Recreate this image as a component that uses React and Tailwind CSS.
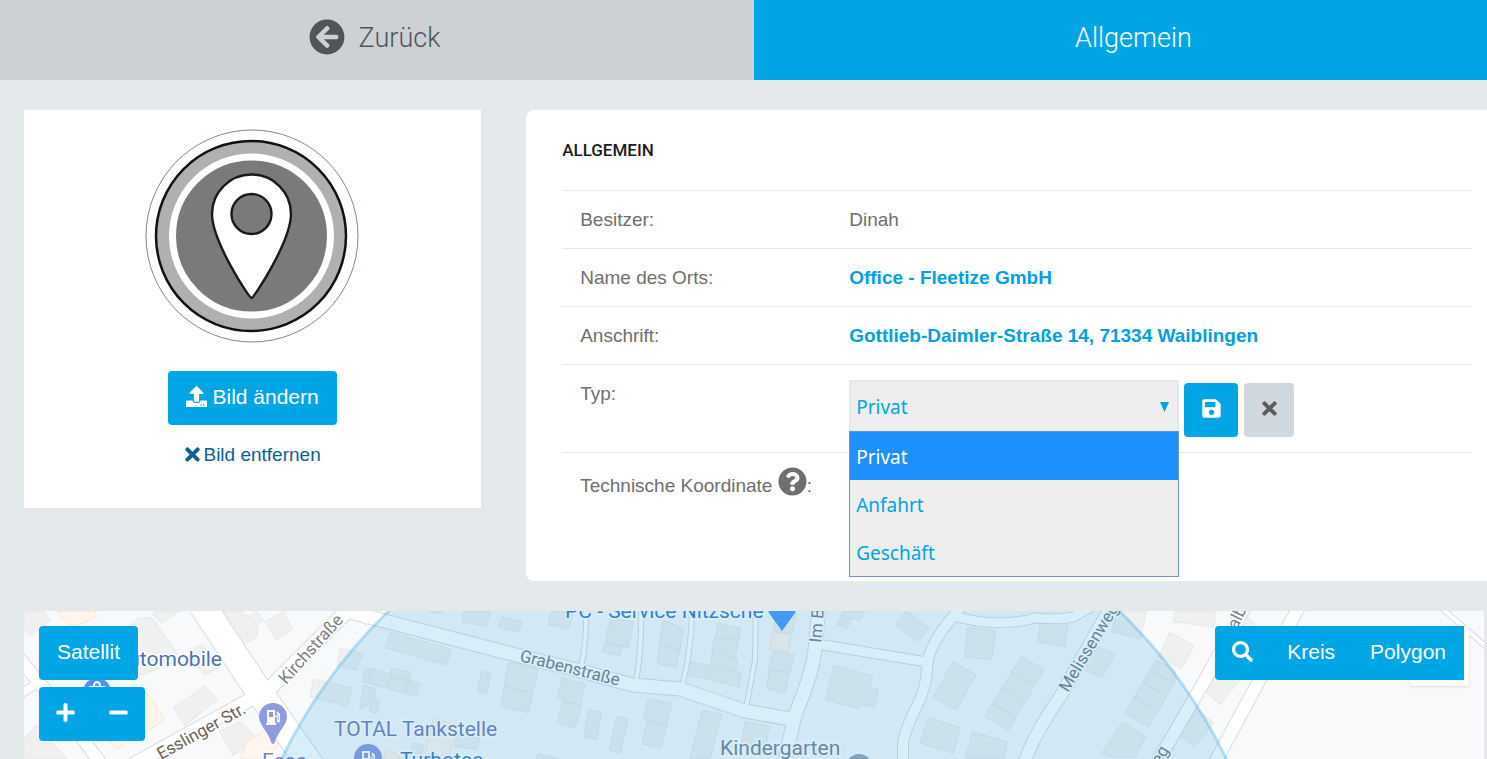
import {
    FaArrowCircleLeft,
    FaMinus,
    FaPlus,
    FaQuestionCircle,
    FaSave,
    FaSearch,
    FaTimes,
    FaUpload,
} from "react-icons/fa";

const TYPES = ["Privat", "Anfahrt", "Geschäft"];

// building outlines, grouped by map tile (three units per screen pixel)
const TILES = [
    {
        x: 0,
        buildings: [
            "72,18 130,18 152,45 95,92 72,75",
            "415,38 455,38 545,165 430,208 400,208 330,120",
            "465,18 538,18 485,55 458,30",
            "585,130 605,118 655,170 655,190 615,210 572,160",
            "520,308 615,243 652,285 555,362",
            "658,378 725,350 770,400 700,452",
            "670,18 725,18 735,30 690,60",
            "693,68 745,30 775,62 770,95 730,120",
            "750,35 770,18 790,45 770,60",
            "795,50 850,20 876,72 830,104",
            "72,400 110,360 200,462 72,462",
            "940,222 1058,250 1040,305 1000,292 930,275",
            "1020,130 1088,145 1070,195 1012,182",
            "1095,190 1125,195 1125,240 1088,230",
            "1090,240 1125,250 1125,290 1080,310",
        ],
        shops: [
            "170,18 285,18 290,35 232,62 205,62",
            "438,262 495,345 350,432 320,400 438,330",
            "740,410 800,370 840,410 800,462 720,462",
        ],
    },
    {
        x: 370,
        buildings: [
            "62,83 243,133 230,180 45,128",
            "283,18 360,18 350,64 277,50",
            "395,36 454,50 447,80 385,66",
            "545,18 610,18 595,71 535,58",
            "185,15 220,15 215,26 182,22",
            "720,40 790,50 775,128 707,110",
            "705,113 755,125 748,152 698,140",
            "880,45 942,72 930,132 868,120",
            "868,120 930,132 917,188 862,175",
            "1045,55 1112,70 1105,110 1038,95",
            "1035,93 1105,108 1095,160 1025,148",
            "1028,145 1103,162 1095,205 1020,190",
            "950,167 1114,203 1107,245 945,208",
            "0,190 65,208 55,250 0,236",
            "65,190 122,202 118,228 62,215",
            "62,215 118,228 107,265 53,250",
            "118,226 150,234 140,275 107,265",
            "0,278 30,288 20,325 0,320",
            "335,198 362,206 350,265 322,260",
            "415,172 505,192 475,323 393,305",
            "575,218 645,238 632,300 562,282",
            "578,290 634,302 615,368 562,355",
            "655,313 695,322 680,404 642,396",
            "740,335 775,342 750,444 718,436",
            "835,280 905,296 890,360 820,342",
            "832,346 890,360 872,430 816,416",
            "997,315 1055,328 1020,462 960,462",
            "130,414 162,420 155,447 122,442",
            "262,390 330,400 320,434 255,425",
            "505,447 570,462 500,462",
        ],
        shops: ["190,340 262,360 255,400 235,455 165,445 175,400", "50,430 95,462 40,462"],
    },
    {
        x: 740,
        buildings: [
            "310,18 375,18 358,48 305,28",
            "305,28 335,42 320,72 291,58",
            "500,18 566,70 532,110 465,58",
            "283,182 398,212 388,245 416,254 402,306 360,298 355,311 256,284",
            "682,67 767,78 755,164 675,155",
            "903,42 985,55 974,124 892,112",
            "640,170 708,210 648,316 580,276",
            "845,154 912,194 805,376 735,334",
            "565,338 662,368 640,444 540,414",
            "698,380 802,412 790,462 675,462",
            "1060,120 1125,145 1085,219 1035,195",
            "100,140 162,150 150,205 84,192",
            "88,194 148,206 135,264 79,250",
            "15,350 88,364 75,430 5,420",
            "110,18 170,18 158,85 100,80",
        ],
        shops: ["100,80 153,90 145,142 90,132"],
    },
    {
        x: 1110,
        buildings: [
            "195,18 318,18 312,66 190,50",
            "20,18 108,18 92,102 5,80",
            "180,82 252,122 214,192 145,155",
            "138,165 196,195 195,230 116,365 45,325",
            "38,350 108,395 75,455 0,455 -25,445",
            "330,165 395,220 330,298 262,240",
            "245,298 312,355 252,425 188,372",
            "415,38 445,70 370,80 380,50",
        ],
        shops: [],
    },
];

const ROADS = [
    { d: "M202 605 L258 690 L314 770", w: 28 },
    { d: "M270 688 L350 608 L370 618", w: 16 },
    { d: "M255 697 L130 766", w: 15 },
    { d: "M14 652 L60 708 L102 765", w: 14 },
    { d: "M20 694 L44 680", w: 10 },
    { d: "M350 612 L520 656 L577 670 L633 685 L680 689 L745 711 L790 719", w: 15 },
    { d: "M586 605 Q587 640 581 668", w: 6 },
    { d: "M641 605 Q642 650 636 682", w: 6 },
    { d: "M692 605 Q692 650 682 686", w: 6 },
    { d: "M756 605 L755 660 L746 708", w: 6 },
    { d: "M819 605 L815 650 Q812 675 795 715 L783 770", w: 15 },
    { d: "M817 644 L927 662", w: 11 },
    { d: "M965 603 Q930 640 927 665 Q928 685 915 710 Q903 735 903 745 L903 770", w: 12 },
    { d: "M957 617 Q1000 628 1035 618 Q1060 620 1073 617 L1098 603", w: 11 },
    { d: "M1022 768 Q1036 730 1060 697 L1112 605", w: 14 },
    { d: "M1154 768 L1205 680 L1246 605", w: 14 },
    { d: "M1212 768 L1300 605", w: 14 },
    { d: "M1438 605 L1490 650", w: 6 },
];

const FuelPin = ({ x, y }) => (
    <g transform={`translate(${x} ${y})`}>
        <path
            d="M-14 0 A14 14 0 1 1 14 0 C14 8 5 14 1.5 26 Q0 28 -1.5 26 C-5 14 -14 8 -14 0Z"
            fill="#8f9be0"
        />
        <path
            d="M-6 -7 h8 v13 h1 v2 h-10 v-2 h1z M-4 -5 v5 h4 v-5z M4 -6 l3 3 v7 a1.6 1.6 0 0 1 -3.200 0 v-4 h-1.500 v-1.500 h2.500 v4.500 h.8 v-4 l-2 -2z"
            fill="#fff"
            fillRule="evenodd"
        />
    </g>
);

const MapCanvas = () => (
    <svg
        className="absolute inset-0 h-full w-full font-['Roboto',sans-serif]"
        viewBox="24 611 1460 148"
        preserveAspectRatio="xMidYMin slice"
        aria-hidden="true"
    >
        <rect x="0" y="600" width="1500" height="200" fill="#f8f9fb" />
        {TILES.map((tile) => (
            <g key={tile.x} transform={`translate(${tile.x} 605) scale(0.33333)`} strokeWidth="3">
                {tile.buildings.map((points) => (
                    <polygon key={points} points={points} fill="#f0f0f0" stroke="#e6e7e8" />
                ))}
                {tile.shops.map((points) => (
                    <polygon key={points} points={points} fill="#fef6ee" stroke="#fbe3cd" />
                ))}
            </g>
        ))}
        <path
            d="M1010 671 L1031 683 M1001 687 L1022 698 M992 704 L1013 715 M1150 669 L1168 680 M1143 682 L1161 693 M1134 697 L1152 707 M505 687 L532 693"
            stroke="#e2e4e6"
            fill="none"
        />
        <g fill="none" stroke="#d8dbe0" strokeLinejoin="round">
            {ROADS.map((road) => (
                <path key={road.d} d={road.d} strokeWidth={road.w} />
            ))}
        </g>
        <g fill="none" stroke="#fff" strokeLinejoin="round">
            {ROADS.map((road) => (
                <path key={road.d} d={road.d} strokeWidth={road.w - 2} />
            ))}
        </g>

        <circle cx="97" cy="692" r="14" fill="#5491f5" />
        <path d="M90 687 h14 v12 h-14z M94 687 v-1 a3 4 0 0 1 6 0 v1" fill="none" stroke="#fff" strokeWidth="2" />
        <FuelPin x={273} y={717} />
        <FuelPin x={368} y={758} />
        <path d="M767 605 h30 l-2 8 l-13 18 l-13 -18z" fill="#4f9bf7" />
        <circle cx="859" cy="767" r="13" fill="#9aa5b1" />

        <g stroke="#fff" strokeWidth="3" paintOrder="stroke" fontSize="21">
            <text x="222" y="666" textAnchor="end" fill="#4a71b8">Automobile</text>
            <text x="334" y="736" fill="#7480bb">TOTAL Tankstelle</text>
            <text x="262" y="768" fill="#7480bb">Esso</text>
            <text x="400" y="767" fill="#3f7cc9">Turbotec</text>
            <text x="565" y="618" fill="#3f7cc9">PC - Service Nitzsche</text>
            <text x="720" y="755" fill="#7c8794">Kindergarten</text>
            <g fontSize="17" fill="#7a8086">
                <text transform="translate(519 661) rotate(14)">Grabenstraße</text>
                <text transform="translate(286 685) rotate(-48)">Kirchstraße</text>
                <text transform="translate(161 760) rotate(-29)" fill="#6b6259">Esslinger Str.</text>
                <text transform="translate(1068 693) rotate(-59)">Melissenweg</text>
                <text transform="translate(821 643) rotate(-85)">Im Bild</text>
                <text transform="translate(1237 630) rotate(-64)">alber</text>
                <text transform="translate(1160 766) rotate(-60)">eg</text>
            </g>
        </g>

        <circle
            cx="754"
            cy="988"
            r="525"
            fill="#0a95dc"
            fillOpacity="0.16"
            stroke="#1a9ee6"
            strokeOpacity="0.28"
            strokeWidth="3"
        />
    </svg>
);

const PlaceImage = () => (
    <svg className="h-[214px] w-[214px] overflow-visible" viewBox="1 0 214 214" role="img" aria-label="Ort">
        <circle cx="107" cy="107" r="106" fill="#fff" stroke="#7f859c" />
        <circle cx="106" cy="107" r="95" fill="#b1afb0" stroke="#111" strokeWidth="2.500" />
        <circle cx="106.500" cy="107" r="79" fill="#7a7a7a" stroke="#fff" strokeWidth="7" />
        <path
            d="M106.500 169 C104 169 67 112 67 85 A39.500 39.500 0 0 1 146 85 C146 112 109 169 106.500 169Z"
            fill="#fff"
            stroke="#1a1a1a"
            strokeWidth="2.400"
        />
        <circle cx="106.500" cy="85" r="20" fill="#7a7a7a" stroke="#1a1a1a" strokeWidth="2.400" />
    </svg>
);

const Row = ({ label, children }) => (
    <tr className="border-t border-[#e4eaee]">
        <th scope="row" className="w-[287px] py-[14px] pl-[18px] text-left align-top font-normal">
            {label}
        </th>
        <td className="py-[14px]">{children}</td>
    </tr>
);

const TypeSelect = () => (
    <div className="relative w-[330px]">
        <select
            id="type"
            defaultValue="Privat"
            className="block h-[52px] w-full appearance-none border-2 border-[#e4e9ec] bg-[#eeeeee] px-[5px] pt-[2px] font-['Noto_Sans',sans-serif] text-[19px] text-[#00a5e6] outline-none"
        >
            {TYPES.map((type) => (
                <option key={type}>{type}</option>
            ))}
        </select>
        <svg className="pointer-events-none absolute right-[10px] top-[22px] h-[10px] w-[9px]" viewBox="0 0 9 10">
            <path d="M0 0 h9 l-4.500 10z" fill="#00a5e6" />
        </svg>
        <ul
            role="listbox"
            aria-label="Typ"
            className="absolute left-0 top-[51px] z-10 w-full border border-[#6f93cb] bg-[#eeeeee] font-['Noto_Sans',sans-serif] text-[19px] text-[#00a5e6]"
        >
            {TYPES.map((type) => (
                <li
                    key={type}
                    role="option"
                    aria-selected={type === "Privat"}
                    className="px-1.5 pt-[2px] leading-[46px] aria-selected:bg-[#1e90ff] aria-selected:text-white"
                >
                    {type}
                </li>
            ))}
        </ul>
    </div>
);

export default function App() {
    return (
        <div className="flex min-h-screen flex-col overflow-hidden bg-[#e4e9ec] font-['Liberation_Sans',sans-serif] text-[19px] leading-[29px] text-[#6f6f6f]">
            <nav className="-ml-[5px] -mr-[26px] grid h-20 grid-cols-2 font-['Roboto',sans-serif] text-[27px] font-light">
                <a href="#back" className="flex items-center justify-center gap-[14px] bg-[#cdd1d3] pb-[3px] text-[#50555a]">
                    <FaArrowCircleLeft className="mb-[3px] text-[36px]" />
                    Zurück
                </a>
                <a href="#general" className="flex items-center justify-center bg-[#00a5e6] pb-[3px] text-white">
                    Allgemein
                </a>
            </nav>

            <div className="flex items-start gap-[45px] py-[30px] pl-6">
                <section className="flex h-[398px] w-5/16 shrink-0 flex-col items-center bg-white pt-[19px]">
                    <PlaceImage />
                    <button className="mt-7 flex h-[54px] items-center gap-[5px] rounded bg-[#00a5e6] px-[18px] pb-1 text-[21px] text-white">
                        <FaUpload />
                        Bild ändern
                    </button>
                    <button className="mt-[15px] flex items-center pr-[2px] text-[#0d5f91]">
                        <FaTimes className="text-[21px]" />
                        Bild entfernen
                    </button>
                </section>

                <section className="min-h-[471px] flex-1 rounded-l-lg bg-white pl-9 pr-[15px] pt-[26px]">
                    <h2 className="font-['Roboto',sans-serif] text-[17px] font-medium text-[#1c1c1c]">ALLGEMEIN</h2>
                    <table className="mt-[25px] w-full border-collapse">
                        <tbody>
                            <Row label="Besitzer:">Dinah</Row>
                            <Row label="Name des Orts:">
                                <a href="#name" className="font-bold text-[#009fe0]">Office - Fleetize GmbH</a>
                            </Row>
                            <Row label="Anschrift:">
                                <a href="#address" className="font-bold text-[#009fe0]">
                                    Gottlieb-Daimler-Straße 14, 71334 Waiblingen
                                </a>
                            </Row>
                            <Row label={<label htmlFor="type">Typ:</label>}>
                                <div className="flex items-start gap-[5px] py-px">
                                    <TypeSelect />
                                    <div className="flex gap-1.5 pt-[3px]">
                                        <button
                                            aria-label="Speichern"
                                            className="flex h-[54px] w-[54px] items-center justify-center rounded bg-[#00a5e6] pb-1 text-[21px] text-white"
                                        >
                                            <FaSave />
                                        </button>
                                        <button
                                            aria-label="Abbrechen"
                                            className="flex h-[54px] w-[50px] items-center justify-center rounded bg-[#d0d8de] pb-1 text-[21px] text-[#5c5c5c]"
                                        >
                                            <FaTimes />
                                        </button>
                                    </div>
                                </div>
                            </Row>
                            <Row
                                label={
                                    <span className="whitespace-nowrap">
                                        Technische Koordinate{" "}
                                        <FaQuestionCircle className="inline align-[-4px] text-[29px]" />:
                                    </span>
                                }
                            />
                        </tbody>
                    </table>
                </section>
            </div>

            <section className="relative mr-[3px] ml-6 min-h-[148px] flex-1 overflow-hidden">
                <MapCanvas />
                <div className="relative flex items-start justify-between p-[15px] pr-5 text-[21px] text-white">
                    <div className="flex flex-col items-start gap-[7px]">
                        <button className="h-[54px] rounded bg-[#00a5e6] px-[18px] pb-1">Satellit</button>
                        <div className="flex h-[54px] rounded bg-[#00a5e6] pb-1">
                            <button aria-label="Vergrößern" className="px-4">
                                <FaPlus />
                            </button>
                            <button aria-label="Verkleinern" className="px-4">
                                <FaMinus />
                            </button>
                        </div>
                    </div>
                    <div className="relative">
                        <div className="absolute -bottom-1.5 -right-[5px] h-[60px] w-[60px] rounded bg-white shadow" />
                        <div className="relative flex h-[54px] rounded-l bg-[#00a5e6]">
                            <button aria-label="Suchen" className="px-[17px] pb-1">
                                <FaSearch />
                            </button>
                            <button className="px-[17px] pb-1">Kreis</button>
                            <button className="px-[18px] pb-1">Polygon</button>
                        </div>
                    </div>
                </div>
            </section>
        </div>
    );
}
